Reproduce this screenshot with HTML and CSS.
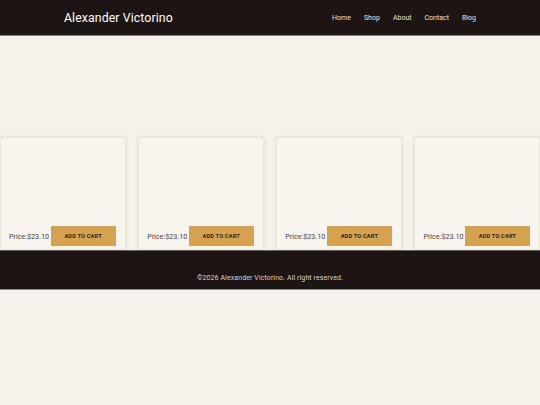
FILE: index.html
```html
<!DOCTYPE html>
<html lang="en">
<head>
<meta charset="utf-8">
<title>Alexander Victorino</title>
<link rel="stylesheet" href="styles.css">
</head>
<body>
<header class="site-header">
  <div class="header-inner">
    <div class="brand">Alexander Victorino</div>
    <nav class="nav">
      <a href="#">Home</a>
      <a href="#">Shop</a>
      <a href="#">About</a>
      <a href="#">Contact</a>
      <a href="#">Blog</a>
    </nav>
  </div>
</header>
<main class="main">
  <div class="products">
    <div class="card"><div class="card-foot"><span class="price">Price:$23.10</span><button class="btn">ADD TO CART</button></div></div>
    <div class="card"><div class="card-foot"><span class="price">Price:$23.10</span><button class="btn">ADD TO CART</button></div></div>
    <div class="card"><div class="card-foot"><span class="price">Price:$23.10</span><button class="btn">ADD TO CART</button></div></div>
    <div class="card"><div class="card-foot"><span class="price">Price:$23.10</span><button class="btn">ADD TO CART</button></div></div>
  </div>
</main>
<footer class="site-footer">
  <p>©2026 Alexander Victorino. All right reserved.</p>
</footer>
</body>
</html>
```
FILE: styles.css
```css
* { box-sizing: border-box; }
html, body { margin: 0; padding: 0; }
body {
  background: #f5f2eb;
  font-family: Roboto, "Liberation Sans", Arial, sans-serif;
  color: #3a3330;
}
.site-header {
  background: #1c1513;
  height: 36px;
  border-bottom: 1px solid #8a8580;
}
.header-inner {
  width: 412px;
  margin: 0 auto;
  height: 35px;
  display: flex;
  align-items: center;
  justify-content: space-between;
}
.brand {
  color: #ffffff;
  font-size: 12.3px;
  letter-spacing: 0.1px;
}
.nav { display: flex; gap: 13px; padding-top: 1px; }
.nav a {
  color: #e8e4df;
  text-decoration: none;
  font-size: 7px;
  font-weight: 400;
}
.main {
  height: 214px;
  padding-top: 101px;
}
.products {
  display: flex;
  gap: 12.5px;
}
.card {
  width: 126px;
  height: 113px;
  background: #f8f5ef;
  border: 1px solid #ebe7e0;
  box-shadow: 0 0 3px rgba(0,0,0,0.12);
  display: flex;
  flex-direction: column;
  justify-content: flex-end;
  padding: 0 9px 3px 8px;
}
.card-foot {
  display: flex;
  align-items: center;
  justify-content: space-between;
}
.price {
  font-size: 7.2px;
  color: #4a4440;
}
.btn {
  width: 65px;
  height: 20px;
  border: none;
  background: #d6a24f;
  color: #2a1f18;
  font-family: Roboto, "Liberation Sans", Arial, sans-serif;
  font-size: 5.6px;
  font-weight: 700;
  padding: 0;
  letter-spacing: 0.2px;
}
.site-footer {
  background: #1c1513;
  height: 40px;
  border-top: 1px solid #6a6560;
  border-bottom: 1px solid #8a8580;
  display: flex;
  justify-content: center;
  align-items: center;
}
.site-footer p {
  margin: 15px 0 0;
  color: #d8d4cf;
  font-size: 7px;
  letter-spacing: 0.1px;
}
```
